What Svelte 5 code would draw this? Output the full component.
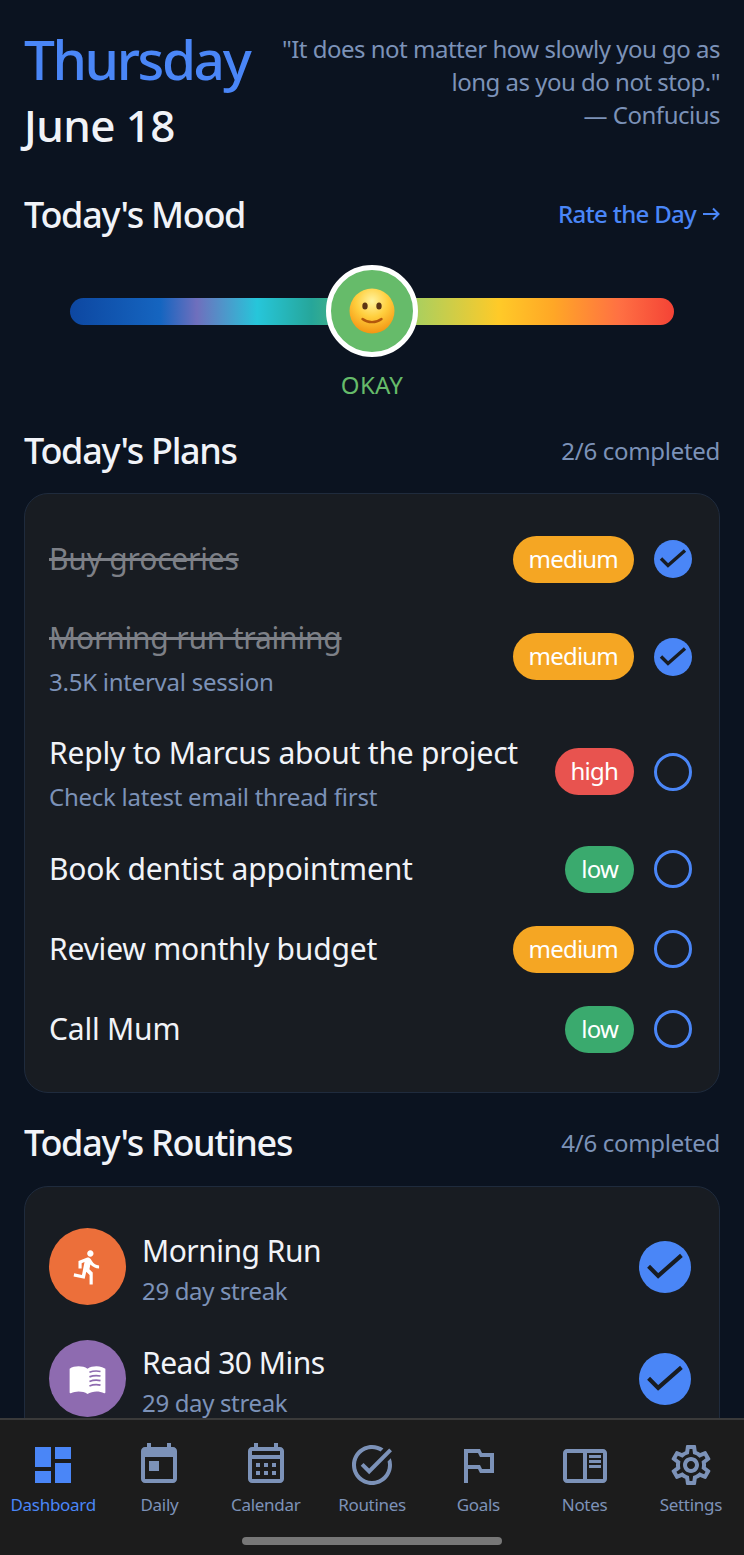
<script>
  const plans = [
    { title: 'Buy groceries', level: 'medium', done: true },
    { title: 'Morning run training', sub: '3.5K interval session', level: 'medium', done: true },
    { title: 'Reply to Marcus about the project', sub: 'Check latest email thread first', level: 'high', done: false },
    { title: 'Book dentist appointment', level: 'low', done: false },
    { title: 'Review monthly budget', level: 'medium', done: false },
    { title: 'Call Mum', level: 'low', done: false }
  ];

  const navItems = [
    { label: 'Dashboard', active: true, d: 'M3 13h8V3H3v10zm0 8h8v-6H3v6zm10 0h8V11h-8v10zm0-18v6h8V3h-8z' },
    { label: 'Daily', d: 'M19 3h-1V1h-2v2H8V1H6v2H5c-1.11 0-1.99.9-1.99 2L3 19c0 1.1.89 2 2 2h14c1.1 0 2-.9 2-2V5c0-1.1-.9-2-2-2zm0 16H5V8h14v11zM7 10h5v5H7z' },
    { label: 'Calendar', d: 'M19 3h-1V1h-2v2H8V1H6v2H5c-1.1 0-2 .9-2 2v14c0 1.1.9 2 2 2h14c1.1 0 2-.9 2-2V5c0-1.1-.9-2-2-2zm0 16H5V9h14v10zm0-12H5V5h14v2zM9 13H7v-2h2v2zm4 0h-2v-2h2v2zm4 0h-2v-2h2v2zm-8 4H7v-2h2v2zm4 0h-2v-2h2v2zm4 0h-2v-2h2v2z' },
    { label: 'Routines', d: 'M22 5.18L10.59 16.6l-4.24-4.24 1.41-1.41 2.83 2.83 10-10L22 5.18zm-2.21 5.04c.13.57.21 1.17.21 1.78 0 4.42-3.58 8-8 8s-8-3.58-8-8 3.58-8 8-8c1.58 0 3.04.46 4.28 1.25l1.44-1.44C16.1 2.67 14.13 2 12 2 6.48 2 2 6.48 2 12s4.48 10 10 10 10-4.48 10-10c0-1.19-.22-2.33-.6-3.39l-1.61 1.61z' },
    { label: 'Goals', d: 'M14 6l-1-2H5v17h2v-7h5l1 2h7V6h-6zm4 8h-4l-1-2H7V6h5l1 2h5v6z' },
    { label: 'Notes', d: 'M21 4H3c-1.1 0-2 .9-2 2v13c0 1.1.9 2 2 2h18c1.1 0 2-.9 2-2V6c0-1.1-.9-2-2-2zM3 19V6h8v13H3zm18 0h-8V6h8v13zm-7-9.5h6V11h-6zm0 2.5h6v1.5h-6zm0-5h6v1.5h-6z' },
    { label: 'Settings', d: 'M19.43 12.98c.04-.32.07-.64.07-.98 0-.34-.03-.66-.07-.98l2.11-1.65c.19-.15.24-.42.12-.64l-2-3.46c-.09-.16-.26-.25-.44-.25-.06 0-.12.01-.17.03l-2.49 1c-.52-.4-1.08-.73-1.69-.98l-.38-2.65C14.46 2.18 14.25 2 14 2h-4c-.25 0-.46.18-.49.42l-.38 2.65c-.61.25-1.17.59-1.69.98l-2.49-1c-.06-.02-.12-.03-.18-.03-.17 0-.34.09-.43.25l-2 3.46c-.13.22-.07.49.12.64l2.11 1.65c-.04.32-.07.65-.07.98 0 .33.03.66.07.98l-2.11 1.65c-.19.15-.24.42-.12.64l2 3.46c.09.16.26.25.44.25.06 0 .12-.01.17-.03l2.49-1c.52.4 1.08.73 1.69.98l.38 2.65c.03.24.24.42.49.42h4c.25 0 .46-.18.49-.42l.38-2.65c.61-.25 1.17-.59 1.69-.98l2.49 1c.06.02.12.03.18.03.17 0 .34-.09.43-.25l2-3.46c.12-.22.07-.49-.12-.64l-2.11-1.65zm-1.98-1.71c.04.31.05.52.05.73 0 .21-.02.43-.05.73l-.14 1.13.89.7 1.08.84-.7 1.21-1.27-.51-1.04-.42-.9.68c-.43.32-.84.56-1.25.73l-1.06.43-.16 1.13-.2 1.35h-1.4l-.19-1.35-.16-1.13-1.06-.43c-.43-.18-.83-.41-1.23-.71l-.91-.7-1.06.43-1.27.51-.7-1.21 1.08-.84.89-.7-.14-1.13c-.03-.31-.05-.54-.05-.74s.02-.43.05-.73l.14-1.13-.89-.7-1.08-.84.7-1.21 1.27.51 1.04.42.9-.68c.43-.32.84-.56 1.25-.73l1.06-.43.16-1.13.2-1.35h1.39l.19 1.35.16 1.13 1.06.43c.43.18.83.41 1.23.71l.91.7 1.06-.43 1.27-.51.7 1.21-1.07.85-.89.7.14 1.13zM12 8c-2.21 0-4 1.79-4 4s1.79 4 4 4 4-1.79 4-4-1.79-4-4-4zm0 6c-1.1 0-2-.9-2-2s.9-2 2-2 2 .9 2 2-.9 2-2 2z' }
  ];
</script>

<div class="screen">
  <main class="content">
    <header class="top">
      <div class="dates">
        <div class="weekday">Thursday</div>
        <div class="date">June 18</div>
      </div>
      <div class="quote">
        <p>"It does not matter how slowly you go as long as you do not stop."</p>
        <p class="author">— Confucius</p>
      </div>
    </header>

    <div class="section-head mood-head">
      <h2>Today's Mood</h2>
      <span class="link">
        Rate the Day
        <svg width="17" height="14" viewBox="0 0 17 14" fill="none" stroke="currentColor" stroke-width="2"><path d="M0 7h15.5M10 1.5L15.5 7 10 12.5" /></svg>
      </span>
    </div>

    <div class="mood">
      <div class="track"></div>
      <div class="knob">
        <svg width="46" height="46" viewBox="0 0 46 46">
          <defs>
            <radialGradient id="face" cx="0.5" cy="0.28" r="0.78">
              <stop offset="0" stop-color="#fff3a0" />
              <stop offset="0.45" stop-color="#ffcf3e" />
              <stop offset="1" stop-color="#f28c0c" />
            </radialGradient>
          </defs>
          <circle cx="23" cy="23" r="22.5" fill="url(#face)" />
          <ellipse cx="16" cy="18" rx="2.7" ry="3.5" fill="#5b3413" />
          <ellipse cx="30" cy="18" rx="2.7" ry="3.5" fill="#5b3413" />
          <path d="M13.5 31c5.5 4.2 13.5 4.2 19 0" fill="none" stroke="#b3570c" stroke-width="2.4" stroke-linecap="round" />
        </svg>
      </div>
    </div>
    <div class="mood-label">OKAY</div>

    <div class="section-head">
      <h2>Today's Plans</h2>
      <span class="count">2/6 completed</span>
    </div>

    <section class="card plans">
      {#each plans as plan}
        <div class="plan" class:two-line={plan.sub}>
          <div class="plan-text">
            <div class="plan-title" class:done={plan.done}>{plan.title}</div>
            {#if plan.sub}<div class="plan-sub">{plan.sub}</div>{/if}
          </div>
          <span class="badge {plan.level}">{plan.level}</span>
          {#if plan.done}
            <svg class="check" width="38" height="38" viewBox="0 0 38 38">
              <circle cx="19" cy="19" r="19" fill="#4a86f7" />
              <path d="M7 18.5l7 7L31 10.5" fill="none" stroke="#181c22" stroke-width="3.4" />
            </svg>
          {:else}
            <span class="open-check"></span>
          {/if}
        </div>
      {/each}
    </section>

    <div class="section-head routines-head">
      <h2>Today's Routines</h2>
      <span class="count">4/6 completed</span>
    </div>

    <section class="card routines">
      <div class="routine">
        <div class="routine-icon run">
          <svg width="38" height="38" viewBox="0 0 24 24" fill="#fff">
            <path d="M13.49 5.48c1.1 0 2-.9 2-2s-.9-2-2-2-2 .9-2 2 .9 2 2 2zm-3.6 13.9l1-4.4 2.1 2v6h2v-7.5l-2.1-2 .6-3c1.3 1.5 3.3 2.5 5.5 2.5v-2c-1.9 0-3.5-1-4.3-2.4l-1-1.6c-.4-.6-1-1-1.7-1-.3 0-.5.1-.8.1l-5.2 2.2v4.7h2v-3.4l1.8-.7-1.6 8.1-4.9-1-.4 2 7 1.4z" />
          </svg>
        </div>
        <div class="routine-text">
          <div class="routine-title">Morning Run</div>
          <div class="routine-sub">29 day streak</div>
        </div>
        <svg width="52" height="52" viewBox="0 0 38 38">
          <circle cx="19" cy="19" r="19" fill="#4a86f7" />
          <path d="M7 18.5l7 7L31 10.5" fill="none" stroke="#181c22" stroke-width="3" />
        </svg>
      </div>
      <div class="routine">
        <div class="routine-icon read">
          <svg width="39" height="39" viewBox="0 0 24 24">
            <path fill="#fff" d="M21 5c-1.11-.35-2.33-.5-3.5-.5-1.95 0-4.05.4-5.5 1.5-1.45-1.1-3.55-1.5-5.5-1.5S2.45 4.9 1 6v14.65c0 .25.25.5.5.5.1 0 .15-.05.25-.05C3.1 20.45 5.05 20 6.5 20c1.95 0 4.05.4 5.5 1.5 1.35-.85 3.8-1.5 5.5-1.5 1.65 0 3.35.3 4.75 1.05.1.05.15.05.25.05.25 0 .5-.25.5-.5V6c-.6-.45-1.25-.75-2-1z" />
            <path fill="none" stroke="#8e6bb0" stroke-width="1" d="M13.2 8.2c2-.8 4.6-1 6.8-.5M13.2 11c2-.8 4.6-1 6.8-.5M13.2 13.8c2-.8 4.6-1 6.8-.5M13.2 16.6c2-.8 4.6-1 6.8-.5" />
          </svg>
        </div>
        <div class="routine-text">
          <div class="routine-title">Read 30 Mins</div>
          <div class="routine-sub">29 day streak</div>
        </div>
        <svg width="52" height="52" viewBox="0 0 38 38">
          <circle cx="19" cy="19" r="19" fill="#4a86f7" />
          <path d="M7 18.5l7 7L31 10.5" fill="none" stroke="#181c22" stroke-width="3" />
        </svg>
      </div>
    </section>
  </main>

  <nav class="tabbar">
    <div class="tabs">
      {#each navItems as item}
        <div class="tab" class:active={item.active}>
          <svg width="48" height="48" viewBox="0 0 24 24" fill="currentColor"><path d={item.d} /></svg>
          <span>{item.label}</span>
        </div>
      {/each}
    </div>
    <div class="home-bar"></div>
  </nav>
</div>

<style>
  :global(body) {
    margin: 0;
    background: #0b1320;
  }

  .screen {
    width: 744px;
    height: 1555px;
    display: flex;
    flex-direction: column;
    overflow: hidden;
    background: #0b1320;
    font-family: "Noto Sans", "Open Sans", sans-serif;
    color: #f1f3f8;
  }

  .content {
    flex: 1;
    min-height: 0;
    overflow: hidden;
    padding: 24px 24px 0;
  }

  .top {
    display: flex;
    justify-content: space-between;
    gap: 20px;
  }

  .weekday {
    font-size: 55px;
    line-height: 70px;
    font-weight: 500;
    color: #4a86f7;
    letter-spacing: -2.4px;
    white-space: nowrap;
  }

  .date {
    font-size: 44px;
    line-height: 62px;
    font-weight: 500;
    letter-spacing: -0.6px;
    white-space: nowrap;
  }

  .quote {
    flex: 1;
    padding-top: 8px;
    text-align: right;
    font-size: 24px;
    line-height: 33px;
    color: #7c92b8;
    letter-spacing: -0.5px;
  }

  .quote p {
    margin: 0;
  }

  .section-head {
    display: flex;
    justify-content: space-between;
    align-items: center;
  }

  .section-head h2 {
    margin: 0;
    font-size: 36px;
    line-height: 48px;
    font-weight: 500;
    letter-spacing: -1.3px;
  }

  .mood-head {
    margin-top: 35px;
  }

  .link {
    display: flex;
    align-items: center;
    gap: 7px;
    padding-bottom: 3px;
    font-size: 24px;
    font-weight: 500;
    color: #4a86f7;
    letter-spacing: -0.7px;
  }

  .count {
    padding-bottom: 2px;
    font-size: 24px;
    color: #7c92b8;
    letter-spacing: -0.3px;
  }

  .mood {
    position: relative;
    height: 92px;
    margin: 26px 46px 0;
    display: flex;
    align-items: center;
  }

  .track {
    width: 100%;
    height: 27px;
    border-radius: 14px;
    background: linear-gradient(90deg, #0d47a1 0%, #1565c0 15%, #6f6fbd 21%, #26c6da 31%, #26a69a 40%, #66bb6a 50%, #aecf5c 58%, #ffca28 71%, #ffa726 80%, #ff7043 91%, #f44336 100%);
  }

  .knob {
    position: absolute;
    left: 50%;
    top: 0;
    width: 92px;
    height: 92px;
    margin-left: -46px;
    box-sizing: border-box;
    border: 5px solid #fff;
    border-radius: 50%;
    background: #66bb6a;
    display: flex;
    align-items: center;
    justify-content: center;
  }

  .mood-label {
    margin: 10px 0 24px;
    text-align: center;
    font-size: 24px;
    line-height: 36px;
    color: #66bb6a;
    letter-spacing: 0.3px;
  }

  .card {
    box-sizing: border-box;
    background: #181c22;
    border: 1px solid #1f2b3d;
    border-radius: 24px;
  }

  .plans {
    margin-top: 18px;
    padding: 33px 27px 31px 24px;
  }

  .plan {
    display: flex;
    align-items: center;
    gap: 20px;
    min-height: 64px;
    margin-bottom: 16px;
  }

  .plan:last-child {
    margin-bottom: 0;
  }

  .plan.two-line {
    min-height: 99px;
  }

  .plan-text {
    flex: 1;
    min-width: 0;
  }

  .plan.two-line .plan-text {
    padding-top: 3px;
  }

  .plan-title {
    font-size: 30px;
    line-height: 40px;
    letter-spacing: -0.2px;
    color: #f1f3f8;
    white-space: nowrap;
  }

  .plan-title.done {
    color: #7d8087;
    text-decoration: line-through;
  }

  .plan-sub {
    margin-top: 7px;
    font-size: 24px;
    line-height: 34px;
    color: #7c92b8;
    letter-spacing: -0.25px;
    white-space: nowrap;
  }

  .badge {
    height: 47px;
    padding: 0 16px;
    border-radius: 24px;
    font-size: 24px;
    line-height: 46px;
    letter-spacing: -0.8px;
    color: #fff;
    box-sizing: border-box;
  }

  .badge.medium {
    background: #f5a623;
  }

  .badge.high {
    background: #e8534f;
  }

  .badge.low {
    background: #3aaa6e;
  }

  .open-check {
    width: 38px;
    height: 38px;
    box-sizing: border-box;
    border: 3px solid #4a86f7;
    border-radius: 50%;
    flex: none;
  }

  .check {
    flex: none;
  }

  .routines-head {
    margin-top: 26px;
  }

  .routines {
    margin-top: 19px;
    padding: 41px 28px 24px 24px;
    display: flex;
    flex-direction: column;
    gap: 35px;
  }

  .routine {
    display: flex;
    align-items: center;
    gap: 16px;
    height: 77px;
  }

  .routine-icon {
    width: 77px;
    height: 77px;
    border-radius: 50%;
    display: flex;
    align-items: center;
    justify-content: center;
    flex: none;
  }

  .routine-icon.run {
    background: #ec6f3a;
  }

  .routine-icon.read {
    background: #8e6bb0;
  }

  .routine-text {
    flex: 1;
    padding-top: 8px;
  }

  .routine-title {
    font-size: 30px;
    line-height: 40px;
    letter-spacing: -0.5px;
  }

  .routine-sub {
    font-size: 24px;
    line-height: 40px;
    color: #7c92b8;
    letter-spacing: -0.35px;
  }

  .tabbar {
    height: 137px;
    flex: none;
    box-sizing: border-box;
    border-top: 2px solid #3a3a3a;
    background: #1c1c1c;
    position: relative;
  }

  .tabs {
    display: grid;
    grid-template-columns: repeat(7, 1fr);
    padding-top: 21px;
  }

  .tab {
    display: flex;
    flex-direction: column;
    align-items: center;
    color: #7c92b8;
  }

  .tab.active {
    color: #4a86f7;
  }

  .tab span {
    margin-top: 4px;
    font-size: 17px;
    line-height: 24px;
    letter-spacing: -0.3px;
  }

  .home-bar {
    position: absolute;
    left: 242px;
    bottom: 10px;
    width: 260px;
    height: 8px;
    border-radius: 4px;
    background: #777;
  }
</style>
